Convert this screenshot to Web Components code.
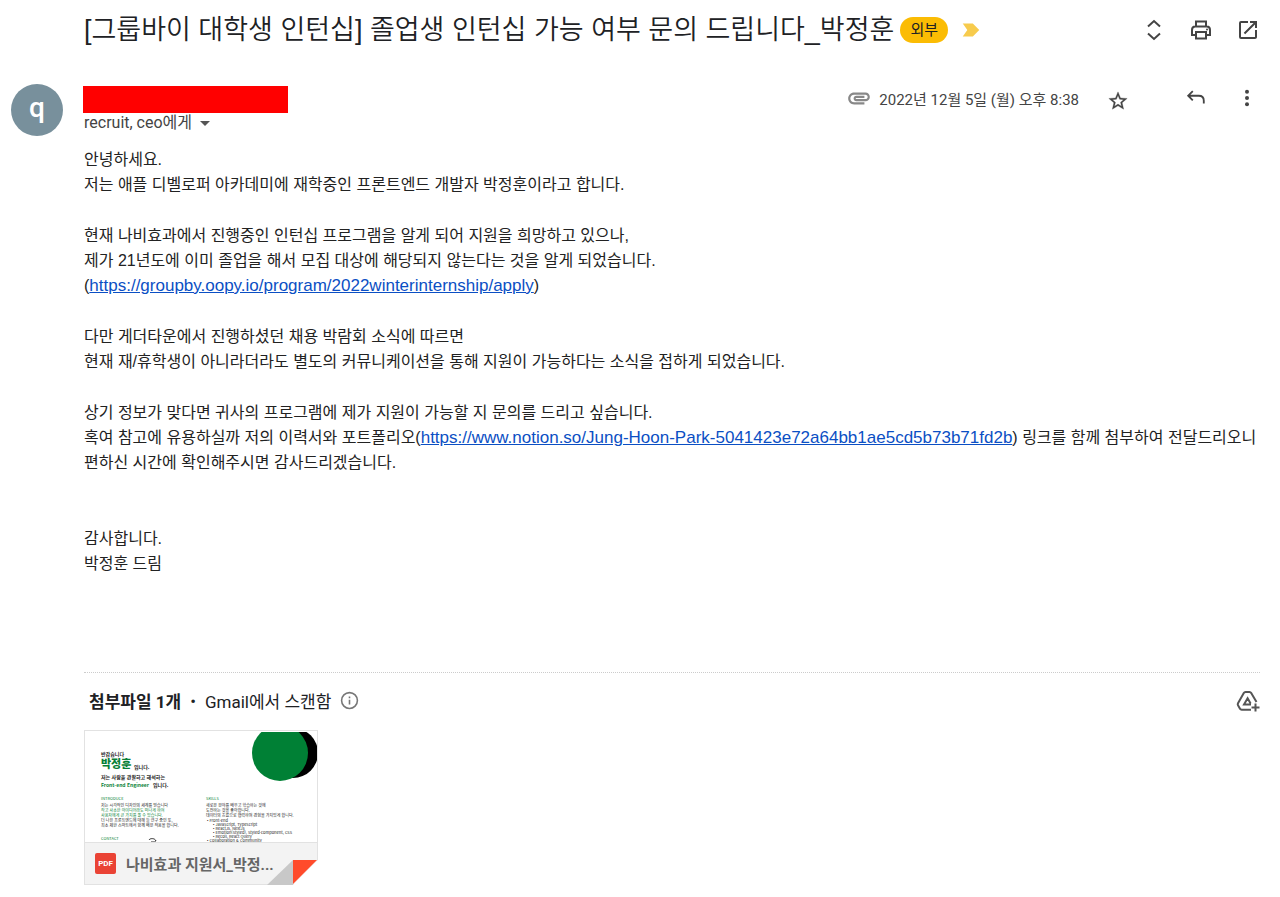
<!DOCTYPE html>
<html lang="ko">
<head>
<meta charset="utf-8">
<meta name="viewport" content="width=device-width, initial-scale=1">
<title>Mail</title>
<style>
    body {
        margin: 0;
        background: #fff;
        color: #202124;
        font-family: "Liberation Sans", "Noto Sans CJK KR", sans-serif;
    }
</style>
</head>
<body>
<mail-message>
    <mail-subject slot="subject" label="외부">[그룹바이 대학생 인턴십] 졸업생 인턴십 가능 여부 문의 드립니다_박정훈</mail-subject>
    <mail-sender slot="sender" initial="q" to="recruit, ceo에게" date="2022년 12월 5일 (월) 오후 8:38"></mail-sender>
    <mail-body slot="body">
        <p>안녕하세요.<br>저는 애플 디벨로퍼 아카데미에 재학중인 프론트엔드 개발자 박정훈이라고 합니다.</p>
        <p>현재 나비효과에서 진행중인 인턴십 프로그램을 알게 되어 지원을 희망하고 있으나,<br>제가 21년도에 이미 졸업을 해서 모집 대상에 해당되지 않는다는 것을 알게 되었습니다.<br>(<a href="https://groupby.oopy.io/program/2022winterinternship/apply">https://groupby.oopy.io/program/2022winterinternship/apply</a>)</p>
        <p>다만 게더타운에서 진행하셨던 채용 박람회 소식에 따르면<br>현재 재/휴학생이 아니라더라도 별도의 커뮤니케이션을 통해 지원이 가능하다는 소식을 접하게 되었습니다.</p>
        <p>상기 정보가 맞다면 귀사의 프로그램에 제가 지원이 가능할 지 문의를 드리고 싶습니다.<br>혹여 참고에 유용하실까 저의 이력서와 포트폴리오(<a href="https://www.notion.so/Jung-Hoon-Park-5041423e72a64bb1ae5cd5b73b71fd2b">https://www.notion.so/Jung-Hoon-Park-5041423e72a64bb1ae5cd5b73b71fd2b</a>) 링크를 함께 첨부하여 전달드리오니<br>편하신 시간에 확인해주시면 감사드리겠습니다.</p>
        <p class="sign">감사합니다.<br>박정훈 드림</p>
    </mail-body>
    <mail-attachments slot="attachments" count="첨부파일 1개" status="Gmail에서 스캔함">
        <attachment-card name="나비효과 지원서_박정...">
            <resume-preview></resume-preview>
        </attachment-card>
    </mail-attachments>
</mail-message>

<script>
const ICONS = {
    expand: '<path d="M6 8.500 12 3l6 5.500M6 15.500 12 21l6-5.500" fill="none" stroke="currentColor" stroke-width="2"/>',
    print: '<path d="M7 8V3.500h10V8M7 17H3v-5c0-2 1-3.500 3-3.500h12c2 0 3 1.500 3 3.500v5h-4M7 14h10v6.500H7z" fill="none" stroke="currentColor" stroke-width="2"/><circle cx="18" cy="11.500" r="1"/>',
    open: '<path d="M19 19H5V5h7V3H5a2 2 0 0 0-2 2v14a2 2 0 0 0 2 2h14c1.100 0 2-.9 2-2v-7h-2v7zM14 3v2h3.590l-9.830 9.830 1.410 1.410L19 6.410V10h2V3h-7z"/>',
    star: '<path d="m22 9.240-7.190-.62L12 2 9.190 8.630 2 9.240l5.460 4.730L5.820 21 12 17.270 18.180 21l-1.630-7.030L22 9.240zM12 15.400l-3.760 2.270 1-4.280-3.320-2.880 4.380-.38L12 6.100l1.710 4.040 4.380.38-3.320 2.880 1 4.280L12 15.400z" stroke="currentColor" stroke-width=".3"/>',
    reply: '<path d="M8.500 4.500 3.500 9.500l5 5M3.500 9.500H15c3.500 0 5.500 2 5.500 5.500v3" fill="none" stroke="currentColor" stroke-width="2"/>',
    more: '<circle cx="12" cy="4.500" r="2.400"/><circle cx="12" cy="12" r="2.400"/><circle cx="12" cy="19.500" r="2.400"/>',
    clip: '<path d="M2 12.500C2 9.460 4.460 7 7.500 7H18c2.210 0 4 1.790 4 4s-1.790 4-4 4H9.500C8.120 15 7 13.880 7 12.500S8.120 10 9.500 10H17v2H9.410c-.55 0-.55 1 0 1H18c1.100 0 2-.9 2-2s-.9-2-2-2H7.500C5.570 9 4 10.570 4 12.500S5.570 16 7.500 16H17v2H7.500C4.460 18 2 15.540 2 12.500z"/>',
    info: '<path d="M11 7h2v2h-2zm0 4h2v6h-2z"/><circle cx="12" cy="12" r="10" fill="none" stroke="currentColor" stroke-width="2"/>',
    important: '<path d="M3 5h11l7 7-7 7H3l5-7z"/>',
    drive: '<path d="M20.500 13 15.200 4a2 2 0 0 0-1.700-1h-4a2 2 0 0 0-1.700 1L2 14.200a2 2 0 0 0 0 2l2 3.600a2 2 0 0 0 1.700 1H15M15 15.500H8l3.600-6.300 3 5.300M19.500 14.500v8M15.500 18.500h8" fill="none" stroke="currentColor" stroke-width="2"/>'
}

class MailIcon extends HTMLElement {
    connectedCallback() {
        this.attachShadow({ mode: 'open' })
        this.shadowRoot.innerHTML = `
            <style>
                :host {
                    display: inline-flex;
                    flex: none;
                    width: var(--icon-size, 24px);
                    height: var(--icon-size, 24px);
                }

                svg {
                    width: 100%;
                    height: 100%;
                    fill: currentColor;
                }
            </style>
            <svg viewBox="0 0 24 24" aria-hidden="true">${ICONS[this.getAttribute('name')]}</svg>
        `
    }
}

class IconButton extends HTMLElement {
    connectedCallback() {
        this.attachShadow({ mode: 'open' })
        this.shadowRoot.innerHTML = `
            <style>
                :host {
                    display: inline-flex;
                }

                button {
                    display: flex;
                    padding: 0;
                    border: 0;
                    background: none;
                    color: inherit;
                    cursor: pointer;
                }
            </style>
            <button type="button" aria-label="${this.getAttribute('label')}">
                <mail-icon name="${this.getAttribute('icon')}"></mail-icon>
            </button>
        `
    }
}

class MailMessage extends HTMLElement {
    connectedCallback() {
        this.attachShadow({ mode: 'open' })
        this.shadowRoot.innerHTML = `
            <style>
                :host {
                    display: block;
                    padding: 8px 20px 12px 11px;
                }

                .content {
                    padding-left: 73px;
                }
            </style>
            <slot name="subject"></slot>
            <slot name="sender"></slot>
            <div class="content">
                <slot name="body"></slot>
                <slot name="attachments"></slot>
            </div>
        `
    }
}

class MailSubject extends HTMLElement {
    connectedCallback() {
        this.attachShadow({ mode: 'open' })
        this.shadowRoot.innerHTML = `
            <style>
                :host {
                    display: flex;
                    align-items: center;
                    min-height: 44px;
                    padding-left: 73px;
                }

                h1 {
                    margin: 0;
                    font-size: 27px;
                    font-weight: 350;
                    line-height: 40px;
                }

                .label {
                    margin: 0 12px 0 6px;
                    padding: 0 10px;
                    border-radius: 13px;
                    background: #fbbc04;
                    font-size: 15px;
                    line-height: 26px;
                }

                .marker {
                    --icon-size: 22px;
                    color: #f7cb4d;
                }

                .tools {
                    display: flex;
                    gap: 23px;
                    margin-left: auto;
                    color: #444;
                }
            </style>
            <h1><slot></slot></h1>
            <span class="label">${this.getAttribute('label')}</span>
            <mail-icon class="marker" name="important"></mail-icon>
            <div class="tools">
                <icon-button icon="expand" label="모두 펼치기"></icon-button>
                <icon-button icon="print" label="모두 인쇄"></icon-button>
                <icon-button icon="open" label="새 창에서 열기"></icon-button>
            </div>
        `
    }
}

class MailSender extends HTMLElement {
    connectedCallback() {
        this.attachShadow({ mode: 'open' })
        this.shadowRoot.innerHTML = `
            <style>
                :host {
                    display: flex;
                    align-items: flex-start;
                    gap: 20px;
                    padding-top: 32px;
                    font-family: Roboto, "Noto Sans CJK KR", sans-serif;
                }

                .avatar {
                    width: 52px;
                    height: 52px;
                    border-radius: 50%;
                    background: #78909c;
                    color: #fff;
                    font-size: 28px;
                    font-weight: 500;
                    line-height: 48px;
                    text-align: center;
                }

                .name {
                    width: 205px;
                    height: 27px;
                    margin-top: 2px;
                    background: #f00;
                }

                .to {
                    display: flex;
                    align-items: center;
                    gap: 8px;
                    padding: 0 1px;
                    border: 0;
                    background: none;
                    color: #444;
                    font: inherit;
                    font-size: 16px;
                    line-height: 20px;
                }

                .to::after {
                    content: "";
                    border: 5px solid transparent;
                    border-top-color: #555;
                    border-bottom: 0;
                }

                .meta {
                    display: flex;
                    align-items: center;
                    height: 28px;
                    margin-left: auto;
                    color: #444;
                    font-size: 15px;
                    --icon-size: 22px;
                }

                .clip {
                    --icon-size: 26px;
                    margin-right: 7px;
                    color: #888;
                }

                .star {
                    margin: 6px 56px 0 28px;
                }

                .reply {
                    margin-right: 30px;
                }

                .more {
                    --icon-size: 20px;
                    margin-right: 3px;
                }
            </style>
            <div class="avatar">${this.getAttribute('initial')}</div>
            <div>
                <div class="name"></div>
                <button class="to" type="button">${this.getAttribute('to')}</button>
            </div>
            <div class="meta">
                <mail-icon class="clip" name="clip"></mail-icon>
                <span>${this.getAttribute('date')}</span>
                <icon-button class="star" icon="star" label="별표"></icon-button>
                <icon-button class="reply" icon="reply" label="답장"></icon-button>
                <icon-button class="more" icon="more" label="더보기"></icon-button>
            </div>
        `
    }
}

class MailBody extends HTMLElement {
    connectedCallback() {
        this.attachShadow({ mode: 'open' })
        this.shadowRoot.innerHTML = `
            <style>
                :host {
                    display: flex;
                    flex-direction: column;
                    gap: 26px;
                    padding: 11px 0 96px;
                    color: #222;
                    font-size: 16px;
                    line-height: 25px;
                }

                ::slotted(p) {
                    margin: 0;
                }

                ::slotted(.sign) {
                    margin-top: 25px;
                }
            </style>
            <slot></slot>
        `
        this.querySelectorAll('a').forEach(link => {
            link.style.color = '#0b4fc4'
            link.style.fontSize = '17px'
        })
    }
}

class MailAttachments extends HTMLElement {
    connectedCallback() {
        this.attachShadow({ mode: 'open' })
        this.shadowRoot.innerHTML = `
            <style>
                :host {
                    display: block;
                    border-top: 1px dotted #ccc;
                    font-family: Roboto, "Noto Sans CJK KR", sans-serif;
                }

                header {
                    display: flex;
                    align-items: center;
                    gap: 9px;
                    height: 55px;
                    padding: 0 0 2px 5px;
                    font-size: 17px;
                }

                .info {
                    --icon-size: 19px;
                    color: #777;
                }

                .save {
                    margin-left: auto;
                    color: #555;
                }
            </style>
            <header>
                <strong>${this.getAttribute('count')}</strong>
                <span>•</span>
                <span>${this.getAttribute('status')}</span>
                <icon-button class="info" icon="info" label="정보"></icon-button>
                <icon-button class="save" icon="drive" label="드라이브에 추가"></icon-button>
            </header>
            <slot></slot>
        `
    }
}

class AttachmentCard extends HTMLElement {
    connectedCallback() {
        this.attachShadow({ mode: 'open' })
        this.shadowRoot.innerHTML = `
            <style>
                :host {
                    display: block;
                    position: relative;
                    box-sizing: border-box;
                    width: 234px;
                    border: 1px solid #e2e2e2;
                }

                footer {
                    display: flex;
                    align-items: center;
                    gap: 10px;
                    height: 40px;
                    padding: 0 0 1px 10px;
                    border-top: 1px solid #e2e2e2;
                    background: #f3f3f3;
                    color: #666;
                    font-size: 15px;
                    font-weight: 700;
                }

                .type {
                    width: 21px;
                    border-radius: 2px;
                    background: #ea4335;
                    color: #fff;
                    font-size: 8px;
                    line-height: 21px;
                    text-align: center;
                }

                /* folded corner */
                .fold {
                    position: absolute;
                    right: -1px;
                    bottom: -1px;
                    width: 51px;
                    height: 25px;
                }
            </style>
            <slot></slot>
            <footer>
                <span class="type">PDF</span>
                <span>${this.getAttribute('name')}</span>
            </footer>
            <svg class="fold" viewBox="0 0 51 25" aria-hidden="true">
                <path d="M26 25 51 0v25z" fill="#fff"/>
                <path d="M0 25 26 0v25z" fill="#c8c8c8"/>
                <path d="M26 0h24L26 24z" fill="#ff4b2b"/>
            </svg>
        `
    }
}

class ResumePreview extends HTMLElement {
    connectedCallback() {
        this.attachShadow({ mode: 'open' })
        this.shadowRoot.innerHTML = `
            <style>
                :host {
                    display: block;
                    height: 111px;
                }

                svg {
                    display: block;
                    width: 100%;
                    height: 100%;
                    font-family: "Noto Sans CJK KR", sans-serif;
                    font-size: 4px;
                    fill: #222;
                }

                .green {
                    fill: #087f36;
                }

                .bold {
                    font-size: 5px;
                    font-weight: 700;
                }

                .name {
                    font-size: 11px;
                    font-weight: 900;
                }
            </style>
            <svg viewBox="0 0 232 111">
                <circle cx="208" cy="22" r="25" fill="#000"/>
                <circle cx="195" cy="22" r="28" fill="#008035"/>
                <path d="M167 0h65v1h-65z" fill="#fff"/>
                <text class="bold" x="16" y="25">반갑습니다</text>
                <text class="name green" x="16" y="37">박정훈</text>
                <text class="bold" x="49" y="38">입니다.</text>
                <text class="bold" x="16" y="48">저는 사람을 관찰하고 해석하는</text>
                <text class="bold green" x="16" y="56">Front-end Engineer</text>
                <text class="bold" x="68" y="56">입니다.</text>
                <text class="green" x="16" y="69">INTRODUCE</text>
                <text x="16" y="76">저는 시각적인 디자인의 세계를 믿습니다</text>
                <text class="green" x="16" y="81">작고 사소한 아이디어라도 떠나게 하여</text>
                <text class="green" x="16" y="86">사용자에게 큰 가치를 줄 수 있습니다.</text>
                <text x="16" y="91">더 나은 프론트엔드에 대해 늘 연구 중인 또,</text>
                <text x="16" y="96">최소 제한 스마트에서 함께 배운 적용을 합니다.</text>
                <text class="green" x="16" y="109">CONTACT</text>
                <path d="M64 109c1-2 6-2 7 1M66 111h5" fill="none" stroke="#222" stroke-width="1"/>
                <text class="green" x="121" y="69">SKILLS</text>
                <text x="121" y="76">새로운 분야를 배우고 학습하는 것에</text>
                <text x="121" y="81">도전하는 것을 좋아합니다.</text>
                <text x="121" y="86">데이터의 흐름으로 협력하며 경험을 가치있게 합니다.</text>
                <text x="122" y="91">• Front-end</text>
                <text x="128" y="95">• JavaScript, TypeScript</text>
                <text x="128" y="99">• ReactJs, NextJs</text>
                <text x="128" y="103">• Emotion(Styled), Styled-component, CSS</text>
                <text x="128" y="107">• Recoil, React Query</text>
                <text x="122" y="111">• Collaboration &amp; Community</text>
            </svg>
        `
    }
}

customElements.define('mail-icon', MailIcon)
customElements.define('icon-button', IconButton)
customElements.define('mail-message', MailMessage)
customElements.define('mail-subject', MailSubject)
customElements.define('mail-sender', MailSender)
customElements.define('mail-body', MailBody)
customElements.define('mail-attachments', MailAttachments)
customElements.define('attachment-card', AttachmentCard)
customElements.define('resume-preview', ResumePreview)
</script>
</body>
</html>
